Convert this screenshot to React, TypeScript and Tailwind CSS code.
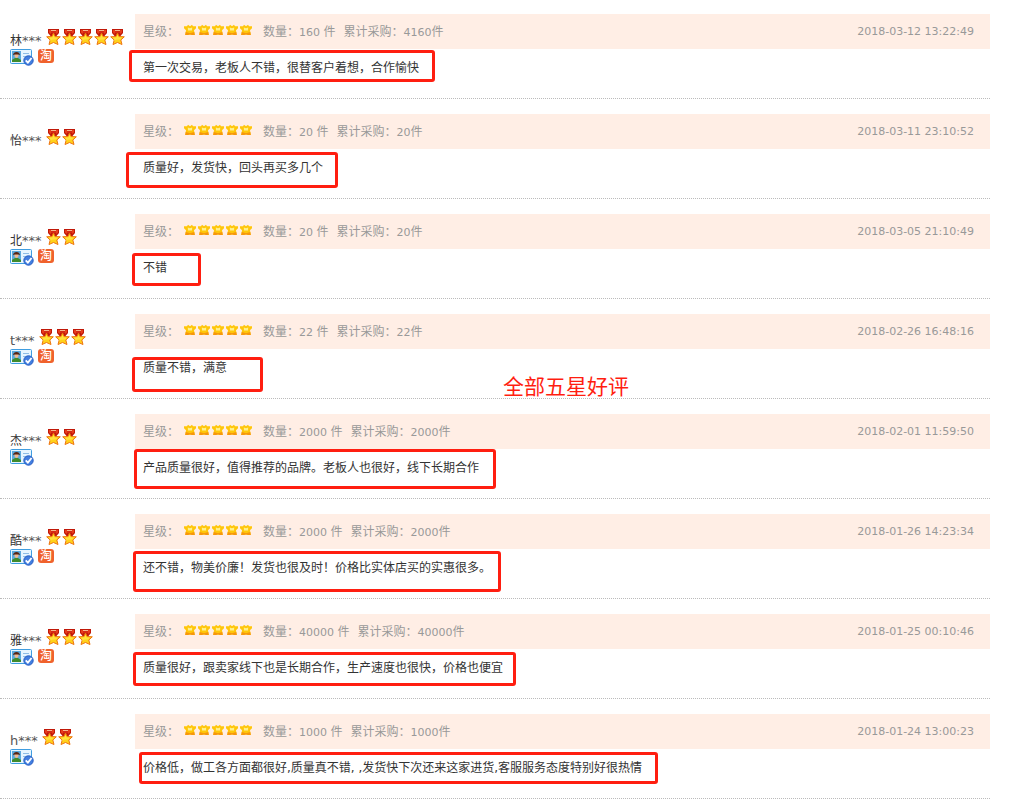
import React from "react";

type Review = {
  name: string;
  latin?: boolean;
  medals: number;
  idCard: boolean;
  taobao: boolean;
  quantity: number;
  total: number;
  date: string;
  comment: string;
  mark: string;
};

const reviews: Review[] = [
  { name: "林", medals: 5, idCard: true, taobao: true, quantity: 160, total: 4160, date: "2018-03-12 13:22:49", comment: "第一次交易，老板人不错，很替客户着想，合作愉快", mark: "-left-1.5 top-px w-[306px] h-8" },
  { name: "怡", medals: 2, idCard: false, taobao: false, quantity: 20, total: 20, date: "2018-03-11 23:10:52", comment: "质量好，发货快，回头再买多几个", mark: "-left-[9px] top-[3px] w-[212px] h-9" },
  { name: "北", medals: 2, idCard: true, taobao: true, quantity: 20, total: 20, date: "2018-03-05 21:10:49", comment: "不错", mark: "-left-[3px] top-1 w-[69px] h-[33px]" },
  { name: "t", latin: true, medals: 3, idCard: true, taobao: true, quantity: 22, total: 22, date: "2018-02-26 16:48:16", comment: "质量不错，满意", mark: "-left-[3px] top-2 w-[131px] h-[35px]" },
  { name: "杰", medals: 2, idCard: true, taobao: false, quantity: 2000, total: 2000, date: "2018-02-01 11:59:50", comment: "产品质量很好，值得推荐的品牌。老板人也很好，线下长期合作", mark: "-left-px top-0 w-[362px] h-10" },
  { name: "酷", medals: 2, idCard: true, taobao: true, quantity: 2000, total: 2000, date: "2018-01-26 14:23:34", comment: "还不错，物美价廉！发货也很及时！价格比实体店买的实惠很多。", mark: "-left-0.5 top-0.5 w-[368px] h-[41px]" },
  { name: "雅", medals: 3, idCard: true, taobao: true, quantity: 40000, total: 40000, date: "2018-01-25 00:10:46", comment: "质量很好，跟卖家线下也是长期合作，生产速度也很快，价格也便宜", mark: "-left-0.5 top-[3px] w-[383px] h-[34px]" },
  { name: "h", latin: true, medals: 2, idCard: true, taobao: false, quantity: 1000, total: 1000, date: "2018-01-24 13:00:23", comment: "价格低，做工各方面都很好,质量真不错, ,发货快下次还来这家进货,客服服务态度特别好很热情", mark: "left-1 top-[3px] w-[519px] h-8" },
];

function Medal() {
  return (
    <svg width="16" height="16" viewBox="0 0 16 16" aria-hidden="true">
      <path d="M2 0h11v4L10.500 7h-6L2 4z" fill="#c01808" />
      <path d="M3 1h2v4L3 3.600zM12 1h-2v4l2-1.400z" fill="#e83c1c" />
      <path d="M5 1h5v1H5z" fill="#f7b58c" />
      <path d="M5 2h5v2H5z" fill="#d42a14" />
      <path d="M7.500 4l1.600 3.500 5.200.3-3.500 3.200 1.200 4.500-4.500-2-4.500 2L4.200 11 .7 7.800l5.200-.3z" fill="#ffd21a" stroke="#ee7410" strokeLinejoin="round" />
      <path d="M7.500 6l1 2.500 3.500.2-2.500 1.800-3.500.2-2 1.300.500-1.800-2-1.500L6.500 8.500z" fill="#ffe43e" />
    </svg>
  );
}

function RatingStar() {
  return (
    <svg width="14" height="12" viewBox="0 0 14 12" aria-hidden="true">
      <path d="M1 2.200h3L5 .8l2 1.500L9 .8l1 1.400h3v2L11 6.200l.8 4.800H9.400L7 10.400 4.600 11H2.200L3 6.200l-2-2z" fill="#ffc60a" />
      <path d="M2.700 8L7 9.200 11.300 8l.5 3H9.400L7 10.400 4.600 11H2.200z" fill="#f7960c" />
      <path d="M4.800 3.500L7 4.300l2.200-.8L9 6.500H5z" fill="#fff08a" />
    </svg>
  );
}

function IdCard() {
  return (
    <svg width="24" height="17" viewBox="0 0 24 17" role="img" aria-label="实名认证">
      <rect x=".5" y=".5" width="21" height="14" rx="1" fill="#e6f5ff" stroke="#3f9de0" />
      <rect x="2" y="2" width="9" height="11" fill="#5da9dc" />
      <path d="M2 13v-2l3-2h3l3 2v2z" fill="#3f8b2d" />
      <circle cx="6.500" cy="6.800" r="2.100" fill="#f2b78d" />
      <path d="M3 6.300c.5-4.400 6.500-4.400 7 0L8.500 5.400h-4z" fill="#572211" />
      <path d="M13 4.500h6M13 7.500h4" stroke="#8dbce6" />
      <circle cx="18.500" cy="11.500" r="4.700" fill="#427ee0" stroke="#255bc0" />
      <path d="M15.700 11.300l2.200 2.300 3.700-4.600" fill="none" stroke="#fff" strokeWidth="1.800" />
    </svg>
  );
}

function Num({ children }: { children: React.ReactNode }) {
  return <span className="text-[11px] leading-none">{children}</span>;
}

function ReviewRow({ review }: { review: Review }) {
  return (
    <li className="flex border-b border-dotted border-[#bbbbbb] pt-[15px] first:pt-3.5">
      <div className="w-[135px] shrink-0 pt-[15px] pl-2.5">
        <div className="flex h-5 items-start gap-1">
          <span className="leading-6 whitespace-nowrap text-[#555555]">
            <span className={review.latin ? "text-[13px]" : "text-xs text-[#333333]"}>{review.name}</span>
            <span className="text-[13px]">***</span>
          </span>
          <span className="flex">
            {Array.from({ length: review.medals }, (_, i) => <Medal key={i} />)}
          </span>
        </div>
        <div className="flex items-start gap-1">
          {review.idCard && <IdCard />}
          {review.taobao && (
            <span className="flex h-3.5 w-4 items-center justify-center rounded-[3px] bg-[#f0622d] pb-px text-xs leading-4 font-medium text-white">淘</span>
          )}
        </div>
      </div>
      <div className="min-w-0 flex-1">
        <div className="flex h-[35px] items-center bg-[#ffeee5] pt-px pr-4 pl-2 whitespace-nowrap text-[#999999]">
          <span>星级：</span>
          <span className="mr-2.5 mb-1 ml-1 flex" role="img" aria-label="5 星">
            {Array.from({ length: 5 }, (_, i) => <RatingStar key={i} />)}
          </span>
          <span className="mr-2">数量：<Num>{review.quantity} </Num>件</span>
          <span>累计采购：<Num>{review.total}</Num>件</span>
          <time className="ml-auto text-[11px]">{review.date}</time>
        </div>
        <div className="relative pt-[9px] pb-5 pl-2">
          <p className="leading-5 text-[#333333]">{review.comment}</p>
          <span className={`pointer-events-none absolute rounded-[3px] border-3 border-[#ff1e10] ${review.mark}`} />
        </div>
      </div>
    </li>
  );
}

export default function App() {
  return (
    <main className="relative bg-white pr-[21px] font-['DejaVu_Sans','Noto_Sans_CJK_SC',sans-serif] text-xs" lang="zh-CN">
      <ul>
        {reviews.map((review) => <ReviewRow key={review.date} review={review} />)}
      </ul>
      <p className="absolute top-[372px] left-[503px] text-[21px] leading-[30px] text-[#ff1e10]">全部五星好评</p>
    </main>
  );
}
